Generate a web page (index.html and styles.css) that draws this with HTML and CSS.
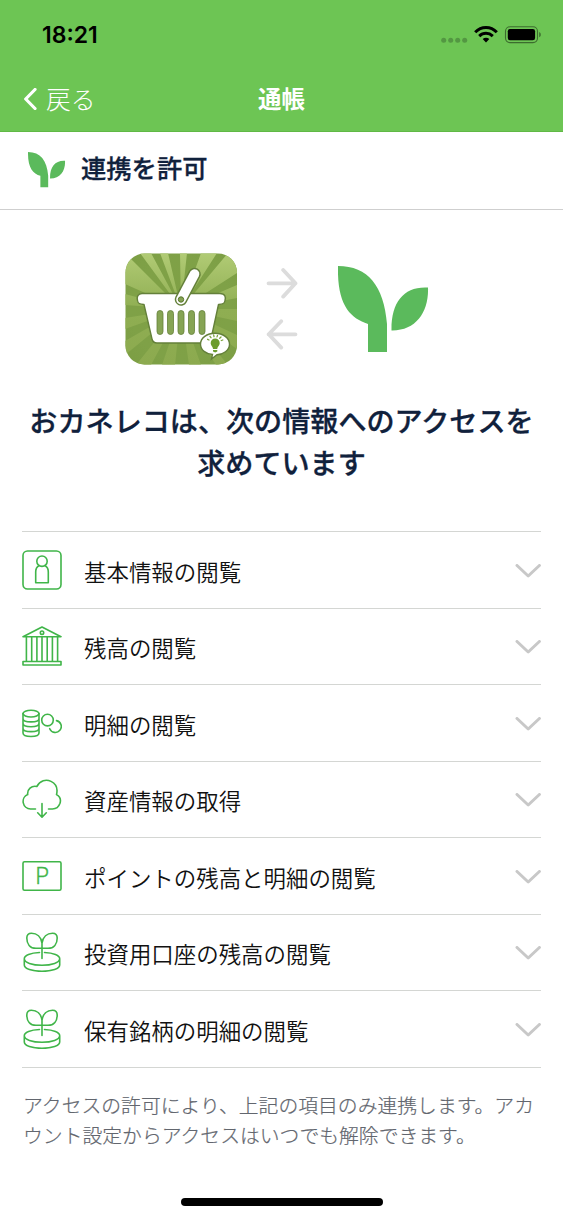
FILE: index.html
```html
<!DOCTYPE html>
<html lang="ja">
<head>
<meta charset="utf-8">
<title>通帳</title>
<link rel="stylesheet" href="styles.css">
</head>
<body>
<svg class="defs" width="0" height="0">
  <symbol id="sprout" viewBox="0 0 91 86"><path d="M0 0C30 0 46 20 49 58V86H30V58C12 52-1 39 0 0ZM90 21.5C66 20 53 36 53.5 64.5C78 65 91 46 90 21.5Z"/></symbol>
  <symbol id="chevron" viewBox="0 0 26 14"><path d="M2 1.500L13.200 12L24.400 1.500"/></symbol>
  <symbol id="plant" viewBox="0 0 40 40">
    <path d="M20 26.500V11C19 5 15 1.200 9.500 1.200C6.500 1.200 4.800 3 4.800 6C4.800 12 8 16.300 14 16.300H26C32 16.300 35.200 12 35.200 6C35.200 3 33.500 1.200 30.500 1.200C25 1.200 21 5 20 11"/>
    <path d="M17.500 20.500C8.500 20.800 2.300 23.500 2.300 26.700C2.300 30.500 10 33.300 20 33.300S37.700 30.500 37.700 26.700C37.700 23.500 31.500 20.800 22.500 20.500M2.300 26.700V33C2.300 36.700 10 39.300 20 39.300S37.700 36.700 37.700 33V26.700"/>
  </symbol>
</svg>
<div class="screen">
  <header class="top">
    <div class="status">
      <span class="time">18:21</span>
      <svg class="indicators" width="102" height="20" viewBox="0 0 102 20">
        <g fill="#539742"><circle cx="3.700" cy="15.300" r="2.500"/><circle cx="10.700" cy="15.300" r="2.500"/><circle cx="17.700" cy="15.300" r="2.500"/><circle cx="24.700" cy="15.300" r="2.500"/></g>
        <g fill="none" stroke="#000" stroke-width="3"><path d="M35.200 7.200C41.300 .9 50.700 .9 56.800 7.200"/><path d="M39.200 11.200C43.200 7.400 48.800 7.400 52.800 11.200"/></g>
        <path d="M42.700 14.100C44.600 12.300 47.400 12.300 49.300 14.100L46 17.400Z"/>
        <rect x="65.500" y="1.800" width="32" height="15.800" rx="4.500" fill="none" stroke="#3c6c2e" stroke-width="1.100"/>
        <rect x="67.800" y="4" width="27.300" height="11.300" rx="2.300"/>
        <path d="M99.200 7C101.300 7.800 101.300 11.500 99.200 12.300Z" fill="#3c6c2e"/>
      </svg>
    </div>
    <nav class="nav">
      <a class="back"><svg width="14" height="22" viewBox="0 0 14 22"><path d="M11 1.500L1.700 11L11 20.500"/></svg><span>戻る</span></a>
      <h1 class="nav-title">通帳</h1>
    </nav>
  </header>
  <section class="brand">
    <svg class="sprout" width="37.500" height="35.400"><use href="#sprout"/></svg>
    <h2 class="brand-title">連携を許可</h2>
  </section>
  <section class="link">
    <svg class="app" width="112" height="112" viewBox="0 0 112 112">
      <defs>
        <radialGradient id="shade" cx=".5" cy=".5" r=".75"><stop offset="0" stop-color="#7fa044"/><stop offset=".6" stop-color="#7fa147"/><stop offset="1" stop-color="#7b9d43"/></radialGradient>
        <linearGradient id="ray" x1="0" y1="0" x2="0" y2="112" gradientUnits="userSpaceOnUse"><stop offset="0" stop-color="#b1cb75"/><stop offset=".5" stop-color="#8fae52"/><stop offset="1" stop-color="#8caa4f"/></linearGradient>
        <clipPath id="tile"><rect x=".5" y=".5" width="111.500" height="111" rx="19"/></clipPath>
      </defs>
      <g clip-path="url(#tile)">
        <rect width="112" height="112" fill="url(#shade)"/>
        <path fill="url(#ray)" d="M56 56L55 0H62ZM56 56L76 0H92ZM56 56L103 0H112V20ZM56 56L112 32V45ZM56 56L112 56V68ZM56 56L112 82V96ZM56 56L103 112H91ZM56 56L76 112H64ZM56 56L50 112H37ZM56 56L26 112H11ZM56 56L0 102V88ZM56 56L0 76V65ZM56 56L0 52V41ZM56 56L0 31V17L4 4ZM56 56L15 0H26ZM56 56L35 0H43Z"/>
      </g>
      <path d="M17 40.500H95C100 40.500 101 44 100 47.500C99.500 50.500 98 51.500 93.500 51.500L86 86Q85 90 81 90H32Q28 90 27 86L19 51.500C14.500 51.500 13 50.500 12.500 47.500C11.500 44 13 40.500 17 40.500Z" stroke="#64803a" stroke-width="1.400" fill="#fff" stroke-linejoin="round"/>
      <path d="M56 46.500L69.500 21" fill="none" stroke="#64803a" stroke-width="12.500" stroke-linecap="round"/>
      <path d="M56 46.500L69.500 21" fill="none" stroke="#fff" stroke-width="9.600" stroke-linecap="round"/>
      <circle cx="56" cy="46.500" r="2.700" fill="#86a454" stroke="#59752c"/>
      <g fill="#86a454" stroke="#64803a" stroke-width=".8"><rect x="32" y="57.500" width="6" height="24" rx="3"/><rect x="42.500" y="57.500" width="6" height="24" rx="3"/><rect x="53" y="57.500" width="6" height="24" rx="3"/><rect x="63.500" y="57.500" width="6" height="24" rx="3"/><rect x="74" y="57.500" width="6" height="24" rx="3"/></g>
      <path d="M90 80.200C98 80.200 104.500 85 104.500 91.200C104.500 97.500 98 101.500 92 101.800L86.500 106L87.500 101.500C81 101 75.500 97 75.500 91.200C75.500 85 82 80.200 90 80.200Z" fill="#fff" stroke="#64803a" stroke-width="1.400"/>
      <path d="M88 96C88 93.500 85.700 93 85.700 90A4.500 4.500 0 0 1 94.700 90C94.700 93 92.300 93.500 92.300 96ZM88 97H92.300V98.500L90.200 99.500L88 98.500Z" fill="#6c9b2e"/>
      <path d="M84 87L82.600 86.300M86 84.700L85 83.300M89 83.700L88.700 82M92 83.900L92.500 82.400M94.700 85.300L96 84M96.300 87.500L97.800 87" stroke="#7ba23c" stroke-width="1.300" stroke-linecap="round"/>
    </svg>
    <svg class="arrows" width="32" height="84" viewBox="0 0 32 84"><path d="M2.500 16.300H29.500M17.200 3L29.500 16.300L17.200 29.600M29.500 67.300H2.500M15.200 54.200L2.700 67.300L15.200 80.600"/></svg>
    <svg class="sprout" width="91" height="86"><use href="#sprout"/></svg>
  </section>
  <h2 class="lead">おカネレコは、次の情報へのアクセスを<br>求めています</h2>
  <ul class="scopes">
    <li class="scope"><svg class="icon" viewBox="0 0 40 40"><rect x="1" y="1" width="38" height="38" rx="4.500"/><circle cx="20" cy="11.200" r="5.200"/><path d="M16.800 15.800C14.600 17 13.700 19.300 13.700 22V32.800H26.300V22C26.300 19.300 25.400 17 23.200 15.800"/></svg><span class="label">基本情報の閲覧</span><svg class="chev"><use href="#chevron"/></svg></li>
    <li class="scope"><svg class="icon" viewBox="0 0 40 40"><path d="M1 10.700L20 1L39 10.700ZM1 35.500H39V39H1ZM4.400 11V35.500M9.700 11V35.500M14.900 11V35.500M20 11V35.500M25.200 11V35.500M30.400 11V35.500M35.600 11V35.500"/><circle cx="20" cy="6.700" r="1.700"/></svg><span class="label">残高の閲覧</span><svg class="chev"><use href="#chevron"/></svg></li>
    <li class="scope"><svg class="icon" viewBox="0 0 40 40"><ellipse cx="9" cy="10.600" rx="8" ry="3.400"/><path d="M1 10.600V30C1 34.600 17 34.600 17 30V10.600M1 15.400C1 20 17 20 17 15.400M1 20.300C1 24.900 17 24.900 17 20.300M1 25.200C1 29.800 17 29.800 17 25.200"/><circle cx="25.500" cy="17.100" r="5.800"/><path d="M34.500 17.600A6 6 0 1 1 27.700 25.700"/></svg><span class="label">明細の閲覧</span><svg class="chev"><use href="#chevron"/></svg></li>
    <li class="scope"><svg class="icon" viewBox="0 0 40 40"><path d="M13.500 30H8.500A7.500 7.500 0 0 1 5.700 15.600C5 10.500 9.500 6.300 14.800 7.500C18 1.500 24 0 29 2.400C34 4.800 36 9.500 34.500 15.600C38 17.500 39 21 38 24.300C36.700 28 34 30 30.500 30H26.500M20 24.500V38M15.700 33.800L20 38.200L24.300 33.800"/></svg><span class="label">資産情報の取得</span><svg class="chev"><use href="#chevron"/></svg></li>
    <li class="scope"><svg class="icon" viewBox="0 0 40 40"><rect x="1" y="5.800" width="38" height="28.400" rx="1.500"/><text class="point" x="20" y="27.700" text-anchor="middle">P</text></svg><span class="label">ポイントの残高と明細の閲覧</span><svg class="chev"><use href="#chevron"/></svg></li>
    <li class="scope"><svg class="icon"><use href="#plant"/></svg><span class="label">投資用口座の残高の閲覧</span><svg class="chev"><use href="#chevron"/></svg></li>
    <li class="scope"><svg class="icon"><use href="#plant"/></svg><span class="label">保有銘柄の明細の閲覧</span><svg class="chev"><use href="#chevron"/></svg></li>
  </ul>
  <p class="note">アクセスの許可により、上記の項目のみ連携します。アカ<br>ウント設定からアクセスはいつでも解除できます。</p>
  <div class="home"></div>
</div>
</body>
</html>
```
FILE: styles.css
```css
* { box-sizing: border-box; margin: 0; padding: 0; }
body { background: #fff; font-family: "Noto Sans CJK JP", sans-serif; color: #111; }
svg { display: block; flex: none; }
.defs { position: absolute; }
.screen { width: 563px; height: 1218px; display: flex; flex-direction: column; overflow: hidden; }
.top { height: 132px; flex: none; background: #6dc554; border-bottom: 1px solid #60b945; }
.status { height: 66px; padding: 4px 21px 0 42px; display: flex; align-items: center; justify-content: space-between; }
.time { font: 600 23px/30px Inter, sans-serif; color: #000; letter-spacing: 0; }
.nav { height: 65px; display: grid; grid-template-columns: 1fr auto 1fr; align-items: center; padding: 0 24px; color: #fff; }
.back { display: flex; align-items: center; gap: 8px; font-size: 24.800px; font-weight: 300; line-height: 36px; }
.back span { padding-bottom: 1px; }
.back svg { fill: none; stroke: #fff; stroke-width: 3.200; stroke-linecap: round; stroke-linejoin: round; }
.nav-title { font-size: 23.500px; font-weight: 700; line-height: 36px; padding-bottom: 2px; }
.brand { height: 78px; flex: none; display: flex; align-items: center; gap: 15.500px; padding: 0 28px 1px; border-bottom: 1px solid #cfcfcf; }
.sprout { fill: #5bba5c; }
.brand-title { font-size: 25.300px; font-weight: 500; line-height: 40px; color: #10213c; padding-bottom: 6px; -webkit-text-stroke: .3px #10213c; }
.link { margin-top: 43px; height: 112px; flex: none; display: flex; align-items: center; padding-left: 125px; }
.arrows { margin: 0 40px 0 29px; fill: none; stroke: #dcdcdc; stroke-width: 3.800; stroke-linecap: round; stroke-linejoin: round; }
.lead { margin-top: 34px; flex: none; text-align: center; font-size: 28.100px; font-weight: 500; line-height: 42px; color: #10213c; white-space: nowrap; -webkit-text-stroke: .3px #10213c; }
.scopes { list-style: none; margin: 48px 22px 0; border-top: 1px solid #d4d6d3; }
.scope { height: 76.500px; display: flex; align-items: center; border-bottom: 1px solid #d4d6d3; }
.icon { width: 40px; height: 40px; fill: none; stroke: #40b549; stroke-width: 1.600; stroke-linejoin: round; stroke-linecap: round; }
.point { font: 300 23px "Noto Sans CJK JP", sans-serif; fill: #40b549; stroke: #40b549; stroke-width: .3; }
.label { flex: 1; margin-left: 22px; padding-top: 2px; font-size: 22.450px; line-height: 34px; font-weight: 350; }
.chev { width: 26px; height: 14px; margin-top: 2px; fill: none; stroke: #c8c8c8; stroke-width: 3; stroke-linecap: round; stroke-linejoin: round; }
.note { margin: 22px 0 0 23px; font-size: 19.820px; font-weight: 300; line-height: 30.500px; color: #62666e; white-space: nowrap; -webkit-text-stroke: .2px #62666e; }
.home { width: 202px; height: 8px; margin: auto auto 12px 181px; flex: none; border-radius: 4px; background: #000; }
```
